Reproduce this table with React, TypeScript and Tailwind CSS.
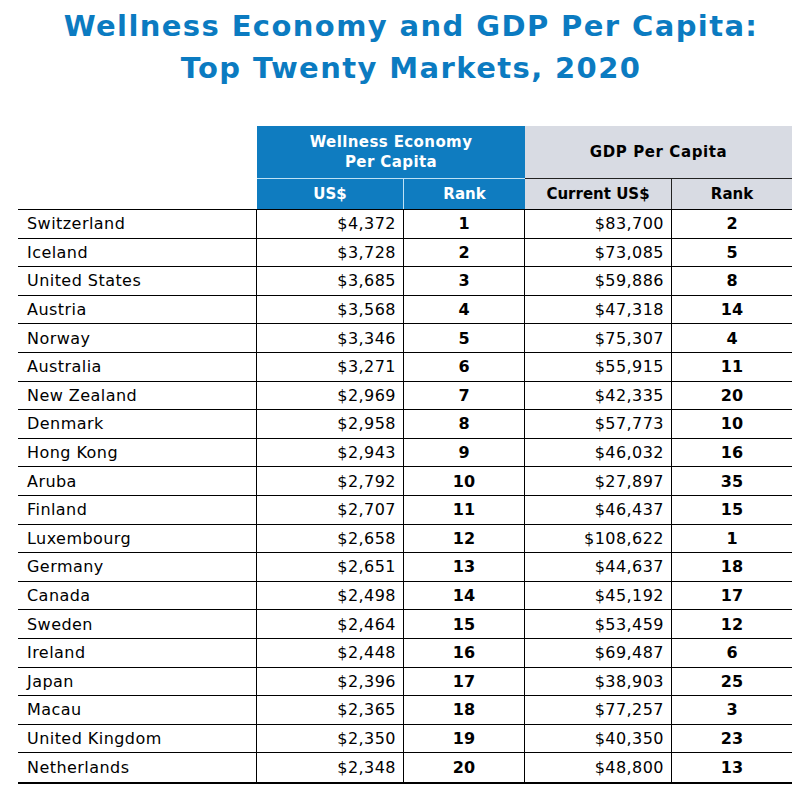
const rows: [string, string, number, string, number][] = [
  ["Switzerland", "$4,372", 1, "$83,700", 2],
  ["Iceland", "$3,728", 2, "$73,085", 5],
  ["United States", "$3,685", 3, "$59,886", 8],
  ["Austria", "$3,568", 4, "$47,318", 14],
  ["Norway", "$3,346", 5, "$75,307", 4],
  ["Australia", "$3,271", 6, "$55,915", 11],
  ["New Zealand", "$2,969", 7, "$42,335", 20],
  ["Denmark", "$2,958", 8, "$57,773", 10],
  ["Hong Kong", "$2,943", 9, "$46,032", 16],
  ["Aruba", "$2,792", 10, "$27,897", 35],
  ["Finland", "$2,707", 11, "$46,437", 15],
  ["Luxembourg", "$2,658", 12, "$108,622", 1],
  ["Germany", "$2,651", 13, "$44,637", 18],
  ["Canada", "$2,498", 14, "$45,192", 17],
  ["Sweden", "$2,464", 15, "$53,459", 12],
  ["Ireland", "$2,448", 16, "$69,487", 6],
  ["Japan", "$2,396", 17, "$38,903", 25],
  ["Macau", "$2,365", 18, "$77,257", 3],
  ["United Kingdom", "$2,350", 19, "$40,350", 23],
  ["Netherlands", "$2,348", 20, "$48,800", 13],
];

const cols = "grid grid-cols-[239px_147px_121px_147px_120px]";

export default function App() {
  return (
    <div
      className="w-[812px] h-[794px] bg-white text-black"
      style={{ fontFamily: '"DejaVu Sans", sans-serif' }}
    >
      <h1 className="pt-[5px] pl-[10px] text-center text-[29px] leading-[42px] font-bold text-[#0b7bc1] tracking-[1.4px]">
        Wellness Economy and GDP Per Capita:
        <br />
        Top Twenty Markets, 2020
      </h1>

      <div className="ml-[18px] mt-[37px] w-[774px]">
        {/* header */}
        <div className={cols}>
          <div />
          <div className="col-span-2 h-[53px] bg-[#0f7cc0] border-b border-[#bfe2f5] flex flex-col items-center justify-center text-white font-bold text-[15px] leading-[20px] tracking-[0.4px]">
            <span>Wellness Economy</span>
            <span>Per Capita</span>
          </div>
          <div className="col-span-2 h-[53px] bg-[#d8dbe3] border-b border-[#222] flex items-center justify-center font-bold text-[15px] tracking-[0.6px]">
            GDP Per Capita
          </div>
        </div>
        <div className={`${cols} border-b border-black`}>
          <div />
          <div className="h-[30px] bg-[#0f7cc0] border-r border-[#bfe2f5] flex items-center justify-center text-white font-bold text-[15px]">
            US$
          </div>
          <div className="h-[30px] bg-[#0f7cc0] flex items-center justify-center text-white font-bold text-[15px]">
            Rank
          </div>
          <div className="h-[30px] bg-[#d8dbe3] border-r border-[#222] flex items-center justify-center font-bold text-[15px]">
            Current US$
          </div>
          <div className="h-[30px] bg-[#d8dbe3] flex items-center justify-center font-bold text-[15px]">
            Rank
          </div>
        </div>

        {/* body */}
        <div className="border-b-2 border-black">
          {rows.map(([name, us, rank, gdp, gdpRank], i) => (
            <div
              key={name}
              className={`${cols} h-[28.6px] text-[16px] tracking-[0.45px] ${i < rows.length - 1 ? "border-b border-black" : ""}`}
            >
              <div className="flex items-center pt-[1px] pl-[9px] border-r border-black">{name}</div>
              <div className="flex items-center justify-end pt-[1px] pr-[7px] border-r border-black">{us}</div>
              <div className="flex items-center justify-center pt-[1px] font-bold tracking-normal border-r border-black">{rank}</div>
              <div className="flex items-center justify-end pt-[1px] pr-[7px] border-r border-black">{gdp}</div>
              <div className="flex items-center justify-center pt-[1px] font-bold tracking-normal">{gdpRank}</div>
            </div>
          ))}
        </div>
      </div>
    </div>
  );
}
